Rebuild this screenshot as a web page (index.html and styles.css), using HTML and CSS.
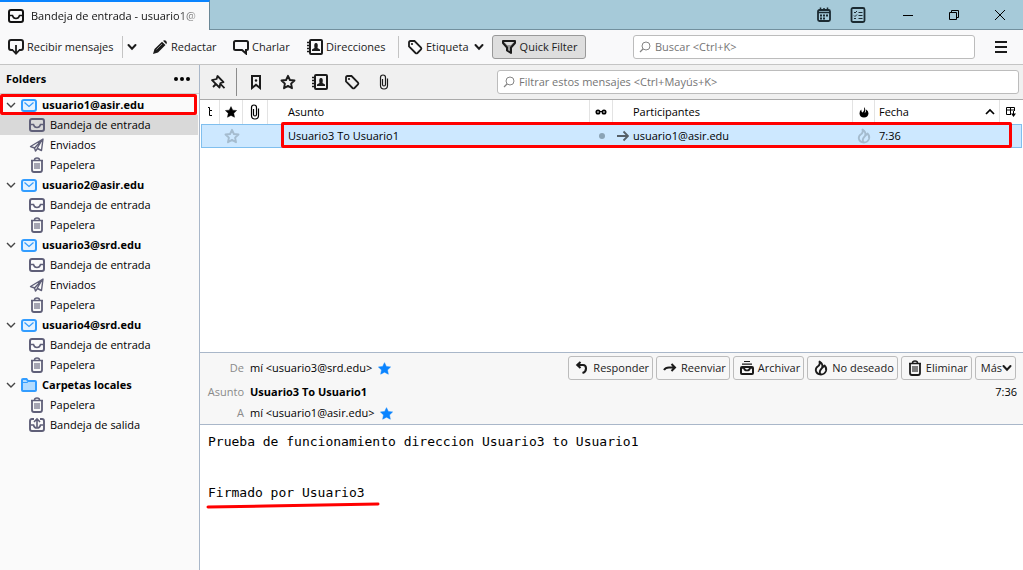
FILE: index.html
```html
<!DOCTYPE html>
<html lang="es">
<head>
<meta charset="utf-8">
<title>Bandeja de entrada - usuario1@asir.edu</title>
<link rel="stylesheet" href="styles.css">
</head>
<body>
<svg class="sprite" aria-hidden="true">
  <symbol id="inbox" viewBox="0 0 16 16"><rect x="1" y="2" width="14" height="12" rx="2" fill="none" stroke="currentColor" stroke-width="2"/><path d="M2 7.500H4.500Q5.200 10.500 8 10.500T11.500 7.500H14" fill="none" stroke="currentColor" stroke-width="1.500"/></symbol>
  <symbol id="get" viewBox="0 0 16 16"><path d="M5 11H3Q1 11 1 9V3Q1 1 3 1H13Q15 1 15 3V9Q15 11 13 11H11" fill="none" stroke="currentColor" stroke-width="2"/><path d="M8 6V14.500M4.500 11 8 14.700 11.500 11" fill="none" stroke="currentColor" stroke-width="1.800"/></symbol>
  <symbol id="chevron" viewBox="0 0 10 10"><path d="M1.500 3 5 6.800 8.500 3" fill="none" stroke="currentColor" stroke-width="2" stroke-linecap="round"/></symbol>
  <symbol id="twisty" viewBox="0 0 10 10"><path d="M1 3 5 7 9 3" fill="none" stroke="currentColor" stroke-width="1.400"/></symbol>
  <symbol id="pencil" viewBox="0 0 16 16"><path d="M1 15 2.500 10 10 2.700 13.500 6 6 13.500ZM11 1.800Q12.500 .5 14 1.800T14.500 5L14.300 5.200Z" fill="currentColor"/><path d="M4.500 10.500 10 5" stroke="#aaa" stroke-width=".8"/></symbol>
  <symbol id="chat" viewBox="0 0 16 16"><path d="M2.500 2H13.500Q15 2 15 3.500V9.500Q15 11 13.500 11H13V14.500L9 11H2.500Q1 11 1 9.500V3.500Q1 2 2.500 2Z" fill="none" stroke="currentColor" stroke-width="2"/></symbol>
  <symbol id="book" viewBox="0 0 16 16"><rect x="3" y="1" width="12" height="14" rx="1" fill="none" stroke="currentColor" stroke-width="2"/><path d="M0 3.500H3M0 6.500H3M0 9.500H3M0 12.500H3" stroke="currentColor" stroke-width="1.500"/><path d="M5 12V10.500L7.500 9Q6.500 4 9 4T10.500 9L13 10.500V12Z" fill="currentColor"/></symbol>
  <symbol id="tag" viewBox="0 0 16 16"><path d="M2 3.500Q2 2 3.500 2H7.500L14 8.500Q14.800 9.500 14 10.500L10.500 14Q9.500 14.800 8.500 14L2 7.500Z" fill="none" stroke="currentColor" stroke-width="1.800"/><circle cx="5" cy="5" r="1.100" fill="currentColor"/></symbol>
  <symbol id="funnel" viewBox="0 0 16 16"><path d="M2 2H14V4L10 8.500V14L6 11.500V8.500L2 4Z" fill="#999" stroke="currentColor" stroke-width="2" stroke-linejoin="round"/><path d="M3.500 3H12.500L10 6H6Z" fill="#ddd"/></symbol>
  <symbol id="search" viewBox="0 0 12 12"><circle cx="7" cy="5" r="4" fill="none" stroke="currentColor"/><path d="M4 8 1 11" stroke="currentColor" stroke-width="1.200"/></symbol>
  <symbol id="pin" viewBox="0 0 16 16"><path d="M7.500 2 13.500 8.200 10.500 9 9.500 13.500 2 6.200 6.600 5Z" fill="none" stroke="currentColor" stroke-width="1.800" stroke-linejoin="round"/><path d="M10 9.500 14.500 14.200M6 10 3 13" stroke="currentColor" stroke-width="1.800"/></symbol>
  <symbol id="bookmark" viewBox="0 0 16 16"><path d="M4 2H12V14L8 10.800 4 14Z" fill="none" stroke="currentColor" stroke-width="2"/><circle cx="8" cy="6.500" r="1.200" fill="currentColor"/></symbol>
  <symbol id="star" viewBox="0 0 16 16"><path d="M8 1.800 9.900 6 14.500 6.500 11.100 9.600 12 14.200 8 11.900 4 14.200 4.900 9.600 1.500 6.500 6.100 6Z" fill="none" stroke="currentColor" stroke-width="1.900" stroke-linejoin="round"/></symbol>
  <symbol id="starfull" viewBox="0 0 16 16"><path d="M8 .8 10.300 5.500 15.500 6 11.700 9.800 12.700 15 8 12.500 3.300 15 4.300 9.800 .5 6 5.700 5.500Z" fill="currentColor" stroke="currentColor" stroke-width=".6" stroke-linejoin="round"/></symbol>
  <symbol id="clip" viewBox="0 0 16 16"><path d="M6.500 5V10.500Q6.500 12 8 12T9.500 10.500V3.500Q9.500 1 7 1T4.500 3.500V11.500Q4.500 15 8 15T11.500 11.500V4.500" fill="none" stroke="currentColor" stroke-width="1.200"/></symbol>
  <symbol id="mail" viewBox="0 0 16 16"><rect x="1" y="3" width="14" height="11" rx="2" fill="#e6f3ff" stroke="#339dff" stroke-width="2"/><path d="M3.500 5.500 8 9.500 12.500 5.500" fill="none" stroke="#339dff" stroke-width="1.200"/></symbol>
  <symbol id="folder" viewBox="0 0 16 16"><path d="M1 13V3Q1 2 2 2H5.500L7 4H14Q15 4 15 5V13Q15 14 14 14H2Q1 14 1 13Z" fill="#b3dcff" stroke="#339dff" stroke-width="2"/><path d="M1 5.500H6.500L8 4" fill="none" stroke="#339dff"/></symbol>
  <symbol id="sent" viewBox="0 0 16 16"><path d="M1.500 9.500 14 2 12.500 13.500 8.500 11.500 6.500 14 5.500 11ZM5.500 11 13 3 8 11.500" fill="none" stroke="currentColor" stroke-width="1.400" stroke-linejoin="round"/></symbol>
  <symbol id="trash" viewBox="0 0 16 16"><path d="M2 3.500H14M5.500 3Q5.500 1 8 1T10.500 3" fill="none" stroke="currentColor" stroke-width="1.500"/><path d="M3 4V13Q3 15 5 15H11Q13 15 13 13V4" fill="none" stroke="currentColor" stroke-width="1.800"/><path d="M6 6V12M8 6V12M10 6V12" stroke="currentColor" stroke-width="1.100"/></symbol>
  <symbol id="outbox" viewBox="0 0 16 16"><path d="M5 2H3Q1 2 1 4V12Q1 14 3 14H13Q15 14 15 12V4Q15 2 13 2H11" fill="none" stroke="currentColor" stroke-width="1.900"/><path d="M8 10V2M5 5 8 1.800 11 5M2 8H4.500Q5 11 8 11T11.500 8H14" fill="none" stroke="currentColor" stroke-width="1.600"/></symbol>
  <symbol id="flame" viewBox="0 0 16 16"><path d="M6.500 1.500Q10.500 4 9 8L11.500 5.500Q14 8 13 11 11.500 14.500 8 14.500 3.500 14.300 2.800 10.500 2.500 8 5 6.300 7.500 4.500 6.500 1.500ZM7.500 14Q5.500 11.500 9 8" fill="none" stroke="currentColor" stroke-width="1.800" stroke-linejoin="round"/></symbol>
  <symbol id="flamefull" viewBox="0 0 12 12"><path d="M6 1Q8.500 4 6.500 7 8.500 6 8.200 3.500 10.500 5 10.500 7.500 10 11.500 6 11.500 1.800 11.500 1.500 7.500 1.500 5 3.200 3.500 3.300 6 4.800 6.500 7 4 6 1Z" fill="currentColor"/></symbol>
  <symbol id="reply" viewBox="0 0 16 16"><path d="M6.500 2 3.300 5 6.500 8M3.800 5H9Q12 5 12 8.500T8.500 13" fill="none" stroke="currentColor" stroke-width="2.100"/></symbol>
  <symbol id="forward" viewBox="0 0 16 16"><path d="M9.500 4 13 7.500 9.500 11M13 7.500H7Q3.500 7.500 2 10" fill="none" stroke="currentColor" stroke-width="2"/></symbol>
  <symbol id="archive" viewBox="0 0 16 16"><path d="M5 1.500H11M3 4.200H13" stroke="currentColor" stroke-width="1.200"/><rect x="2" y="7" width="12" height="7" rx="1" fill="none" stroke="currentColor" stroke-width="2"/><path d="M3 8H5Q5.500 10.500 8 10.500T11 8H13" fill="none" stroke="currentColor" stroke-width="1.700"/></symbol>
  <symbol id="calendar" viewBox="0 0 16 16"><rect x="2" y="3" width="12" height="11" rx="1.500" fill="none" stroke="currentColor" stroke-width="1.800"/><path d="M2 5.500H14" stroke="currentColor" stroke-width="1.500"/><path d="M4.500 .5V4M11.500 .5V4M7 2H9" stroke="currentColor" stroke-width="1.500"/><path d="M4 8.500H12M4 11.500H10" stroke="currentColor" stroke-width="1.800" stroke-dasharray="2 1"/></symbol>
  <symbol id="tasks" viewBox="0 0 16 16"><rect x="1.500" y="1" width="13" height="14" rx="1.500" fill="none" stroke="currentColor" stroke-width="1.800"/><path d="M4 5 5 6 7 4M4 8.500 5 9.500 7 7.500M4 11.500H6M8.500 5.500H12.500M8.500 8.500H12.500M8.500 11.500H12.500" fill="none" stroke="currentColor"/></symbol>
  <symbol id="minimize" viewBox="0 0 12 12"><path d="M1 6.500H11" stroke="currentColor"/></symbol>
  <symbol id="restore" viewBox="0 0 12 12"><path d="M1.500 3.500H8.500V10.500H1.500ZM3.500 3V1.500H10.500V8.500H9" fill="none" stroke="currentColor"/></symbol>
  <symbol id="close" viewBox="0 0 12 12"><path d="M1 1 11 11M11 1 1 11" stroke="currentColor"/></symbol>
  <symbol id="menu" viewBox="0 0 12 12"><path d="M0 1H12M0 6H12M0 11H12" stroke="currentColor" stroke-width="2"/></symbol>
  <symbol id="dots" viewBox="0 0 16 16"><circle cx="2" cy="8" r="2" fill="currentColor"/><circle cx="8" cy="8" r="2" fill="currentColor"/><circle cx="14" cy="8" r="2" fill="currentColor"/></symbol>
  <symbol id="thread" viewBox="0 0 12 12"><path d="M4 1.500H5.500V4.500H8M5.500 4.500V9.500H8" fill="none" stroke="currentColor"/></symbol>
  <symbol id="glasses" viewBox="0 0 12 12"><circle cx="3" cy="6" r="1.800" fill="#999" stroke="currentColor" stroke-width="1.500"/><circle cx="9" cy="6" r="1.800" fill="#999" stroke="currentColor" stroke-width="1.500"/><path d="M5 5.500H7" stroke="currentColor"/></symbol>
  <symbol id="dot" viewBox="0 0 12 12"><circle cx="6" cy="6" r="3" fill="currentColor"/></symbol>
  <symbol id="arrow" viewBox="0 0 12 12"><path d="M0 6H11M6.500 1.500 11 6 6.500 10.500" fill="none" stroke="currentColor" stroke-width="1.800"/></symbol>
  <symbol id="sortup" viewBox="0 0 12 12"><path d="M2 8 6 4 10 8" fill="none" stroke="currentColor" stroke-width="1.700"/></symbol>
  <symbol id="picker" viewBox="0 0 12 12"><path d="M6 8.500H1.500V1.500H9.500V5M1.500 4H9.500M5.500 1.500V8.500" fill="none" stroke="currentColor"/><path d="M6 7.500H11L8.500 11Z" fill="currentColor"/><path d="M8.500 5V8" stroke="currentColor"/></symbol>
</svg>

<div class="window">
  <header class="titlebar">
    <button class="tab"><svg class="icon"><use href="#inbox"/></svg><span class="tab-label">Bandeja de entrada - usuario1@</span></button>
    <div class="title-actions">
      <button aria-label="Calendario"><svg class="icon"><use href="#calendar"/></svg></button>
      <button aria-label="Tareas"><svg class="icon"><use href="#tasks"/></svg></button>
    </div>
    <div class="window-controls">
      <button aria-label="Minimizar"><svg class="icon small"><use href="#minimize"/></svg></button>
      <button aria-label="Restaurar"><svg class="icon small"><use href="#restore"/></svg></button>
      <button aria-label="Cerrar"><svg class="icon small"><use href="#close"/></svg></button>
    </div>
  </header>

  <nav class="toolbar">
    <button class="tool get"><svg class="icon"><use href="#get"/></svg>Recibir mensajes</button>
    <span class="divider"></span>
    <button class="tool drop" aria-label="Opciones de recibir"><svg class="icon tiny"><use href="#chevron"/></svg></button>
    <button class="tool write"><svg class="icon"><use href="#pencil"/></svg>Redactar</button>
    <button class="tool talk"><svg class="icon"><use href="#chat"/></svg>Charlar</button>
    <button class="tool contacts"><svg class="icon"><use href="#book"/></svg>Direcciones</button>
    <span class="divider"></span>
    <button class="tool label"><svg class="icon"><use href="#tag"/></svg>Etiqueta<svg class="icon tiny"><use href="#chevron"/></svg></button>
    <button class="tool quick" aria-pressed="true"><svg class="icon"><use href="#funnel"/></svg>Quick Filter</button>
    <label class="search global"><svg class="icon small"><use href="#search"/></svg><input type="text" aria-label="Buscar" placeholder="Buscar &lt;Ctrl+K&gt;"></label>
    <button class="menu" aria-label="Menú"><svg class="icon small"><use href="#menu"/></svg></button>
  </nav>

  <div class="content">
    <aside class="sidebar">
      <div class="sidebar-head"><h2>Folders</h2><button aria-label="Opciones de carpetas"><svg class="icon"><use href="#dots"/></svg></button></div>
      <ul class="tree">
        <li class="account marked"><button aria-label="Contraer"><svg class="icon tiny"><use href="#twisty"/></svg></button><a href="#"><svg class="icon"><use href="#mail"/></svg>usuario1@asir.edu</a><span class="mark"></span></li>
        <li class="folder selected"><a href="#"><svg class="icon"><use href="#inbox"/></svg>Bandeja de entrada</a></li>
        <li class="folder"><a href="#"><svg class="icon"><use href="#sent"/></svg>Enviados</a></li>
        <li class="folder"><a href="#"><svg class="icon"><use href="#trash"/></svg>Papelera</a></li>
        <li class="account"><button aria-label="Contraer"><svg class="icon tiny"><use href="#twisty"/></svg></button><a href="#"><svg class="icon"><use href="#mail"/></svg>usuario2@asir.edu</a></li>
        <li class="folder"><a href="#"><svg class="icon"><use href="#inbox"/></svg>Bandeja de entrada</a></li>
        <li class="folder"><a href="#"><svg class="icon"><use href="#trash"/></svg>Papelera</a></li>
        <li class="account"><button aria-label="Contraer"><svg class="icon tiny"><use href="#twisty"/></svg></button><a href="#"><svg class="icon"><use href="#mail"/></svg>usuario3@srd.edu</a></li>
        <li class="folder"><a href="#"><svg class="icon"><use href="#inbox"/></svg>Bandeja de entrada</a></li>
        <li class="folder"><a href="#"><svg class="icon"><use href="#sent"/></svg>Enviados</a></li>
        <li class="folder"><a href="#"><svg class="icon"><use href="#trash"/></svg>Papelera</a></li>
        <li class="account"><button aria-label="Contraer"><svg class="icon tiny"><use href="#twisty"/></svg></button><a href="#"><svg class="icon"><use href="#mail"/></svg>usuario4@srd.edu</a></li>
        <li class="folder"><a href="#"><svg class="icon"><use href="#inbox"/></svg>Bandeja de entrada</a></li>
        <li class="folder"><a href="#"><svg class="icon"><use href="#trash"/></svg>Papelera</a></li>
        <li class="account"><button aria-label="Contraer"><svg class="icon tiny"><use href="#twisty"/></svg></button><a href="#"><svg class="icon"><use href="#folder"/></svg>Carpetas locales</a></li>
        <li class="folder"><a href="#"><svg class="icon"><use href="#trash"/></svg>Papelera</a></li>
        <li class="folder"><a href="#"><svg class="icon"><use href="#outbox"/></svg>Bandeja de salida</a></li>
      </ul>
    </aside>

    <main class="main">
      <div class="filterbar">
        <button aria-label="Mantener filtros"><svg class="icon"><use href="#pin"/></svg></button>
        <span class="divider dark"></span>
        <div class="filters">
          <button aria-label="No leídos"><svg class="icon"><use href="#bookmark"/></svg></button>
          <button aria-label="Destacados"><svg class="icon"><use href="#star"/></svg></button>
          <button aria-label="Contactos"><svg class="icon"><use href="#book"/></svg></button>
          <button aria-label="Etiquetas"><svg class="icon"><use href="#tag"/></svg></button>
          <button aria-label="Adjuntos"><svg class="icon"><use href="#clip"/></svg></button>
        </div>
        <label class="search local"><svg class="icon small"><use href="#search"/></svg><input type="text" aria-label="Filtrar mensajes" placeholder="Filtrar estos mensajes &lt;Ctrl+Mayús+K&gt;"></label>
      </div>

      <section class="list">
        <table class="messages">
          <colgroup><col class="c-thread"><col class="c-star"><col class="c-clip"><col class="c-subject"><col class="c-read"><col class="c-people"><col class="c-junk"><col class="c-date"><col class="c-pick"></colgroup>
          <thead><tr>
            <th><svg class="icon small"><use href="#thread"/></svg></th>
            <th><svg class="icon small"><use href="#starfull"/></svg></th>
            <th><svg class="icon"><use href="#clip"/></svg></th>
            <th class="text">Asunto</th>
            <th><svg class="icon small"><use href="#glasses"/></svg></th>
            <th class="text">Participantes</th>
            <th><svg class="icon small"><use href="#flamefull"/></svg></th>
            <th class="date"><span>Fecha<svg class="icon small"><use href="#sortup"/></svg></span></th>
            <th><svg class="icon small"><use href="#picker"/></svg></th>
          </tr></thead>
          <tbody><tr>
            <td></td>
            <td class="faint"><svg class="icon"><use href="#star"/></svg></td>
            <td></td>
            <td class="text">Usuario3 To Usuario1</td>
            <td class="dim"><svg class="icon small"><use href="#dot"/></svg></td>
            <td class="people"><span><svg class="icon small"><use href="#arrow"/></svg>usuario1@asir.edu</span></td>
            <td class="faint"><svg class="icon"><use href="#flame"/></svg></td>
            <td class="date">7:36</td>
            <td></td>
          </tr></tbody>
        </table>
        <span class="mark"></span>
      </section>

      <section class="message-head">
        <dl class="fields">
          <dt>De</dt><dd>mí &lt;usuario3@srd.edu&gt;<svg class="icon blue"><use href="#starfull"/></svg></dd>
          <dt>Asunto</dt><dd class="subject">Usuario3 To Usuario1</dd>
          <dt>A</dt><dd>mí &lt;usuario1@asir.edu&gt;<svg class="icon blue"><use href="#starfull"/></svg></dd>
        </dl>
        <div class="head-right">
          <div class="actions">
            <button><svg class="icon"><use href="#reply"/></svg>Responder</button>
            <button><svg class="icon"><use href="#forward"/></svg>Reenviar</button>
            <button><svg class="icon"><use href="#archive"/></svg>Archivar</button>
            <button><svg class="icon"><use href="#flame"/></svg>No deseado</button>
            <button><svg class="icon"><use href="#trash"/></svg>Eliminar</button>
            <button class="more">Más<svg class="icon tiny"><use href="#chevron"/></svg></button>
          </div>
          <time>7:36</time>
        </div>
      </section>

      <article class="message-body">
        <p>Prueba de funcionamiento direccion Usuario3 to Usuario1</p>
        <p class="signature">Firmado por Usuario3<svg class="underline" viewBox="0 0 174 8"><path d="M2 6 60 5 172 3" fill="none" stroke="#f00" stroke-width="3" stroke-linecap="round"/></svg></p>
      </article>
    </main>
  </div>
</div>
</body>
</html>
```
FILE: styles.css
```css
* { box-sizing: border-box; }
body { margin: 0; font: 11px/16px "Open Sans", "Noto Sans", sans-serif; color: #000; }
button { display: flex; align-items: center; margin: 0; padding: 0; border: 0; background: none; font: inherit; color: inherit; white-space: nowrap; }
a { color: inherit; text-decoration: none; }
.sprite { position: absolute; width: 0; height: 0; }
.icon { width: 16px; height: 16px; flex: none; display: block; }
.icon.small { width: 12px; height: 12px; }
.icon.tiny { width: 10px; height: 10px; }

.window { display: flex; flex-direction: column; height: 100vh; overflow: hidden; }

.titlebar { display: flex; height: 30px; background: #a6cad9; }
.tab { width: 210px; padding: 0 8px; gap: 7px; background: #f9f9fa; border-top: 2px solid #0a84ff; border-right: 1px solid #6a8796; color: #111; }
.tab-label { flex: 1; text-align: left; mask-image: linear-gradient(to right, #000 145px, transparent 175px); }
.title-actions, .window-controls { display: flex; align-items: center; border-bottom: 1px solid #72909e; color: #1b2a31; }
.title-actions { flex: 1; justify-content: flex-end; gap: 18px; padding-right: 19px; }
.window-controls button { width: 46px; height: 29px; justify-content: center; color: #000; }

.toolbar { display: flex; align-items: center; height: 35px; padding: 0 16px 0 8px; background: #f9f9fa; border-bottom: 1px solid #c4c4c4; color: #1b1b1b; }
.tool { gap: 3px; height: 24px; }
.get { width: 114px; }
.drop { width: 29px; padding-left: 4px; }
.write { width: 81px; }
.talk { width: 74px; }
.contacts { width: 91px; }
.label { width: 93px; padding-left: 8px; }
.label .tiny { margin-left: 2px; }
.divider { width: 1px; height: 22px; background: #c4c4c4; }
.divider.dark { height: 28px; background: #8c8c8c; }
.quick { width: 94px; justify-content: center; background: #dedede; border: 1px solid #999; border-radius: 3px; }
.search { display: flex; align-items: center; gap: 4px; height: 24px; padding: 0 5px; background: #fff; border: 1px solid #bcbcbc; border-radius: 3px; color: #858585; }
.search input { flex: 1; min-width: 0; padding: 0; border: 0; outline: 0; background: none; font: inherit; }
.search input::placeholder { color: #757575; opacity: 1; }
.global { flex: 1; margin: 0 20px 0 47px; }

.content { display: flex; flex: 1; min-height: 0; }
.sidebar { width: 200px; flex: none; background: #fafafa; border-right: 1px solid #a9b7c9; }
.sidebar-head { display: flex; align-items: center; justify-content: space-between; height: 29px; padding: 0 9px 0 6px; background: #f0f0f0; border-bottom: 1px solid #cfcfcf; }
.sidebar-head h2 { margin: 0; font-size: 11px; line-height: 16px; }
.tree { margin: 0; padding: 1px 1px 0 0; list-style: none; }
.tree li { position: relative; display: flex; align-items: center; height: 20px; }
.tree a { display: flex; align-items: center; gap: 5px; flex: 1; }
.account { gap: 5px; padding-left: 6px; font-weight: 700; }
.account button { color: #444; }
.folder { padding-left: 29px; }
.folder .icon { color: #5f5f78; }
.selected { background: #d9d9d9; }
.mark { position: absolute; border: 3px solid #f00; border-radius: 2px; pointer-events: none; }
.marked .mark { inset: -1px 1px 0 0; }

.main { display: flex; flex-direction: column; flex: 1; min-width: 0; background: #fff; }
.filterbar { display: flex; align-items: center; height: 35px; padding: 0 4px 0 10px; background: #f0f0f0; border-bottom: 1px solid #aaa; color: #1b1b1b; }
.filterbar > .divider { margin: 0 11px 0 10px; }
.filters { display: flex; gap: 16px; }
.local { flex: 1; margin-left: 105px; }

.list { position: relative; flex: 1; padding: 0 1px; }
.messages { width: 100%; border-collapse: separate; border-spacing: 0; table-layout: fixed; }
.c-thread { width: 19px; }
.c-star { width: 23px; }
.c-clip { width: 25px; }
.c-read { width: 23px; }
.c-people { width: 240px; }
.c-junk { width: 22px; }
.c-date { width: 125px; }
.c-pick { width: 22px; }
.messages th { height: 24px; padding: 0; border-right: 1px solid #e3e3e3; font-weight: 400; text-align: left; }
.messages th:last-child { border-right: 0; }
.messages td { height: 24px; padding: 0; border-top: 1px solid #80bfee; border-bottom: 1px solid #80bfee; background: #cde8ff; }
.messages td:first-child { border-left: 1px solid #80bfee; }
.messages td:last-child { border-right: 1px solid #80bfee; }
.messages .icon { margin: 0 auto; }
.messages .text { padding-left: 20px; }
.messages .date { padding-left: 4px; }
.messages span { display: flex; align-items: center; }
.messages .date .icon { margin: 0 3px 0 auto; }
.people { color: #000; }
.people span { gap: 4px; padding-left: 4px; }
.messages .people .icon { margin: 0; color: #555f67; }
.faint { color: #a5bccf; }
.dim { color: #8ba3b5; }
.list > .mark { inset: 22px 11px auto 81px; height: 26px; }

.message-head { display: flex; justify-content: space-between; height: 73px; padding: 3px 6px 0 6px; background: #f7f7f7; border-top: 1px solid #a9b7c9; border-bottom: 1px solid #a9b7c9; }
.fields { display: grid; grid-template-columns: 38px auto; grid-template-rows: 24px 23px 20px; column-gap: 6px; align-items: center; margin: 0; }
.fields dt { color: #8a8a8a; text-align: right; }
.fields dd { display: flex; align-items: center; gap: 6px; margin: 0; }
.fields .icon { width: 13px; height: 13px; }
.subject { font-weight: 700; }
.blue { color: #0a84ff; }
.head-right { display: flex; flex-direction: column; align-items: flex-end; }
.actions { display: flex; gap: 3px; padding-right: 1px; }
.actions button { height: 24px; padding: 0 3px 0 5px; gap: 3px; border: 1px solid #bcbcbc; border-radius: 3px; color: #1b1b1b; }
.actions .more { gap: 0; }
.head-right time { margin-top: 4px; }

.message-body { height: 145px; padding: 8px; font: 13px/17px "DejaVu Sans Mono", monospace; }
.message-body p { margin: 0; }
.message-body .signature { position: relative; width: max-content; margin-top: 34px; }
.underline { position: absolute; left: -2px; top: 17px; width: 174px; height: 8px; }
```
